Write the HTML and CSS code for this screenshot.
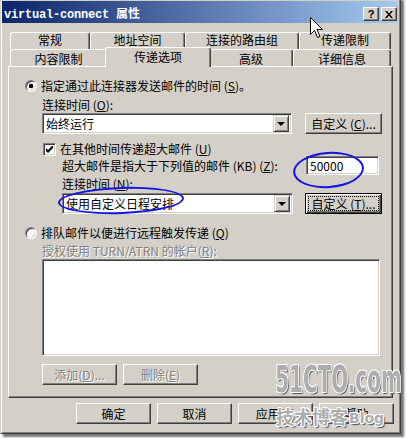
FILE: index.html
```html
<!DOCTYPE html>
<html lang="zh-CN">
<head>
    <meta charset="UTF-8">
    <title>virtual-connect 属性</title>
    <link rel="stylesheet" href="styles.css">
</head>
<body>
    <div class="window">
        <div class="titlebar">
            <span class="title">virtual-connect <span class="title-cjk">属性</span></span>
            <div class="caption-buttons">
                <span class="cap-btn">?</span>
                <span class="cap-btn">
                    <svg width="8" height="7" viewBox="0 0 8 7"><path d="M0 0h2l2 2.5L6 0h2L5 3.5 8 7H6L4 4.5 2 7H0l3-3.5z" fill="#000"/></svg>
                </span>
            </div>
        </div>

        <div class="tabs">
            <div class="tab-row back">
                <div class="tab">常规</div>
                <div class="tab">地址空间</div>
                <div class="tab">连接的路由组</div>
                <div class="tab">传递限制</div>
            </div>
            <div class="tab-row front">
                <div class="tab">内容限制</div>
                <div class="tab selected">传递选项</div>
                <div class="tab">高级</div>
                <div class="tab">详细信息</div>
            </div>
        </div>

        <div class="panel">
            <div class="opt">
                <span class="radio on"></span>
                <span>指定通过此连接器发送邮件的时间 (<u>S</u>)。</span>
            </div>
            <div class="group">
                <div class="label first">连接时间 (<u>O</u>):</div>
                <div class="field-row">
                    <div class="combo sunken wide">
                        <span class="combo-text">始终运行</span>
                        <span class="drop"><span class="arrow"></span></span>
                    </div>
                    <div class="btn">自定义 (<u>C</u>)...</div>
                </div>
                <div class="check-row">
                    <span class="checkbox sunken">
                        <svg width="7" height="7" viewBox="0 0 7 7"><path d="M0 2v3l2 2 5-5V-1L2 4z" fill="#000"/></svg>
                    </span>
                    <span>在其他时间传递超大邮件 (<u>U</u>)</span>
                </div>
                <div class="nested">
                    <div class="size-row">
                        <span>超大邮件是指大于下列值的邮件 (KB) (<u>Z</u>):</span>
                        <div class="edit sunken">50000</div>
                    </div>
                    <div class="label">连接时间 (<u>N</u>):</div>
                    <div class="field-row second">
                        <div class="combo sunken narrow">
                            <span class="combo-text">使用自定义日程安排</span>
                            <span class="drop"><span class="arrow"></span></span>
                        </div>
                        <div class="btn default"><span class="focus">自定义 (<u>T</u>)...</span></div>
                    </div>
                </div>
            </div>
            <div class="opt queue">
                <span class="radio"></span>
                <span>排队邮件以便进行远程触发传递 (<u>Q</u>)</span>
            </div>
            <div class="group">
                <div class="label disabled">授权使用 TURN/ATRN 的帐户(<u>R</u>):</div>
                <div class="listbox sunken"></div>
                <div class="list-buttons">
                    <div class="btn disabled">添加(<u>D</u>)...</div>
                    <div class="btn disabled">删除(<u>E</u>)</div>
                </div>
            </div>
        </div>

        <div class="dialog-buttons">
            <div class="btn">确定</div>
            <div class="btn">取消</div>
            <div class="btn">应用(<u>A</u>)</div>
            <div class="btn">帮助</div>
        </div>
    </div>

    <!-- annotations drawn over the screenshot -->
    <div class="ellipse size-mark"></div>
    <div class="ellipse schedule-mark"></div>

    <div class="watermark">
        <div class="wm-logo">51CTO.com</div>
        <div class="wm-sub">技术博客<span class="wm-blog">Blog</span></div>
    </div>

    <svg class="cursor" width="13" height="21" viewBox="0 0 13 21">
        <path d="M0.5 0.5V17.5L4.5 13.5L7.5 20.5L10 19.5L7 12.5H12.5Z" fill="#fff" stroke="#000"/>
    </svg>
</body>
</html>
```

FILE: styles.css
```css
/* Basic reset */
* {
    box-sizing: border-box;
    margin: 0;
    padding: 0;
}

body {
    font-family: "Noto Sans CJK SC", "Liberation Sans", sans-serif;
    font-size: 12px;
    line-height: 14px;
    color: #000;
    background-color: #fff;
    position: relative;
    width: 407px;
    height: 438px;
    overflow: hidden;
}

u {
    text-decoration: underline;
    text-underline-offset: 1px;
}

/* Window frame */
.window {
    width: 401px;
    height: 437px;
    margin-top: -3px;
    padding: 3px 2px 0 1px;
    background-color: #d4d0c8;
    border: 1px solid;
    border-color: #d4d0c8 #404040 #404040 #d4d0c8;
    box-shadow: inset 1px 1px #fff, inset -1px -1px #808080, 3px 3px 2px rgba(0, 0, 0, 0.55);
}

.titlebar {
    height: 22px;
    display: flex;
    align-items: flex-start;
    justify-content: space-between;
    background: linear-gradient(to right, #0a246a, #a6caf0);
    color: #fff;
}

.title {
    font-family: "Liberation Mono", monospace;
    font-weight: bold;
    font-size: 12px;
    letter-spacing: -0.2px;
    padding: 5px 0 0 2px;
    white-space: pre;
}

.title-cjk {
    font-family: "Noto Sans CJK SC", sans-serif;
    letter-spacing: 0;
}

.caption-buttons {
    display: flex;
    gap: 2px;
    padding: 6px 1px 0 0;
}

.cap-btn {
    width: 16px;
    height: 14px;
    display: flex;
    align-items: center;
    justify-content: center;
    background-color: #d4d0c8;
    border: 1px solid;
    border-color: #fff #404040 #404040 #fff;
    box-shadow: inset -1px -1px #808080;
    color: #000;
    font-family: "Liberation Sans", sans-serif;
    font-weight: bold;
    font-size: 11px;
}

/* Tabs */
.tabs {
    margin: 9px 0 0 8px;
    width: 381px;
}

.tab-row {
    display: grid;
    grid-template-rows: 17px;
}

.tab-row.back {
    grid-template-columns: 80px 95px 114px 92px;
}

.tab-row.front {
    grid-template-columns: 97px 102px 84px 98px;
}

.tab {
    display: flex;
    align-items: center;
    justify-content: center;
    background-color: #d4d0c8;
    border-top: 1px solid #fff;
    border-left: 1px solid #fff;
    border-right: 1px solid #404040;
    box-shadow: inset -1px 0 #808080;
    border-radius: 3px 3px 0 0;
    padding-top: 1px;
}

.tab-row.back .tab {
    padding: 0 0 2px;
}

.tab.selected {
    margin: -2px -2px -1px;
    padding-bottom: 2px;
    z-index: 1;
}

/* Property page */
.panel {
    margin-left: 6px;
    width: 385px;
    height: 332px;
    padding: 12px 0 0 16px;
    border: 1px solid;
    border-color: #fff #404040 #404040 #fff;
    box-shadow: inset -1px -1px #808080;
}

.opt {
    display: flex;
    align-items: center;
    gap: 4px;
    height: 14px;
}

.opt.queue {
    margin-top: 12px;
}

.radio {
    width: 12px;
    height: 12px;
    border-radius: 50%;
    border: 1px solid;
    border-color: #808080 #fff #fff #808080;
    box-shadow: inset 1px 1px #404040, inset -1px -1px #d4d0c8;
    background-color: #fff;
}

.radio.on {
    background: radial-gradient(circle, #000 0, #000 2px, #fff 2.6px);
}

.group {
    margin-left: 17px;
}

.label {
    height: 14px;
    margin-top: 2px;
}

.label.first {
    margin-top: 5px;
}

.label.disabled {
    margin-top: 4px;
}

.disabled {
    color: #808080;
    text-shadow: 1px 1px 0 #fff;
}

.sunken {
    background-color: #fff;
    border: 1px solid;
    border-color: #808080 #fff #fff #808080;
    box-shadow: inset 1px 1px #404040, inset -1px -1px #d4d0c8;
}

.field-row {
    display: flex;
    align-items: center;
    gap: 13px;
    height: 21px;
    margin-top: 1px;
}

.field-row.second {
    gap: 12px;
    margin-top: 2px;
}

.combo {
    height: 21px;
    display: flex;
    align-items: center;
    justify-content: space-between;
    padding: 2px 2px 2px 3px;
}

.combo.wide {
    width: 250px;
}

.combo.narrow {
    width: 231px;
}

.drop {
    width: 16px;
    height: 17px;
    display: flex;
    align-items: center;
    justify-content: center;
    background-color: #d4d0c8;
    border: 1px solid;
    border-color: #d4d0c8 #404040 #404040 #d4d0c8;
    box-shadow: inset 1px 1px #fff, inset -1px -1px #808080;
}

.arrow {
    width: 0;
    height: 0;
    border-left: 4px solid transparent;
    border-right: 4px solid transparent;
    border-top: 4px solid #000;
}

.btn {
    width: 75px;
    height: 21px;
    flex: none;
    display: flex;
    align-items: center;
    justify-content: center;
    background-color: #d4d0c8;
    border: 1px solid;
    border-color: #fff #404040 #404040 #fff;
    box-shadow: inset -1px -1px #808080;
    white-space: nowrap;
}

.field-row .btn {
    width: 77px;
}

.btn.default {
    border-color: #000;
    box-shadow: inset 1px 1px #fff, inset -1px -1px #404040, inset -2px -2px #808080;
}

.focus {
    outline: 1px dotted #000;
    outline-offset: 0;
    padding: 0 2px;
    line-height: 13px;
}

.check-row {
    display: flex;
    align-items: center;
    gap: 4px;
    height: 14px;
    margin: 8px 0 0 1px;
}

.checkbox {
    width: 13px;
    height: 13px;
    display: flex;
    align-items: center;
    justify-content: center;
}

.nested {
    margin-left: 20px;
}

.size-row {
    width: 317px;
    height: 19px;
    display: flex;
    align-items: center;
    justify-content: space-between;
}

.edit {
    width: 73px;
    height: 19px;
    padding: 2px 0 0 3px;
    line-height: 14px;
}

.listbox {
    width: 338px;
    height: 97px;
    margin-top: 1px;
}

.list-buttons {
    display: flex;
    gap: 6px;
    margin-top: 8px;
}

.dialog-buttons {
    display: flex;
    justify-content: flex-end;
    gap: 6px;
    margin-top: 5px;
    padding-right: 4px;
}

/* Annotations */
.ellipse {
    position: absolute;
    border: 2px solid #1414e6;
    border-radius: 50%;
}

.size-mark {
    left: 293px;
    top: 152px;
    width: 71px;
    height: 36px;
    transform: rotate(-4deg);
}

.schedule-mark {
    left: 58px;
    top: 187px;
    width: 126px;
    height: 27px;
    transform: rotate(-2deg);
}

.watermark {
    position: absolute;
    left: 274px;
    top: 362px;
    width: 128px;
    color: #adadad;
    text-shadow: -1px -1px 0 #fff, 1px -1px 0 #fff, -1px 1px 0 #fff, 1px 1px 0 #fff, 2px 2px 1px #555;
}

.wm-logo {
    font-family: "DejaVu Sans Condensed", "DejaVu Sans", sans-serif;
    font-weight: bold;
    font-size: 37px;
    line-height: 36px;
    padding-left: 2px;
    transform: scaleX(0.6);
    transform-origin: left;
    white-space: nowrap;
}

.wm-sub {
    display: flex;
    align-items: flex-end;
    margin-top: 6px;
    padding-left: 2px;
    font-weight: bold;
    font-size: 18px;
    line-height: 24px;
    white-space: nowrap;
}

.wm-blog {
    font-family: "DejaVu Sans", sans-serif;
    font-size: 14px;
    line-height: 20px;
    margin-left: 1px;
}

.cursor {
    position: absolute;
    left: 310px;
    top: 17px;
}
```
